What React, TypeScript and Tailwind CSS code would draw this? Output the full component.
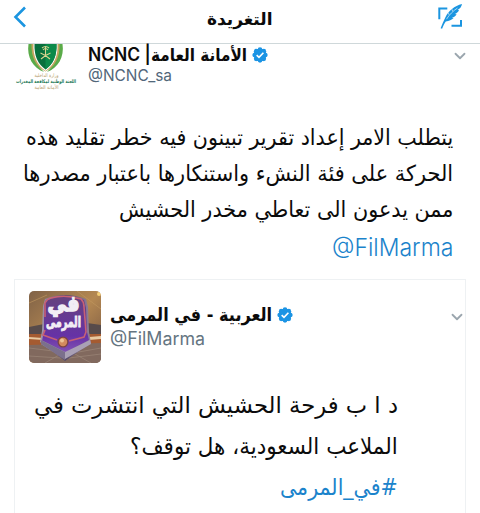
import { useLayoutEffect, useRef, useState } from "react";
import { ChevronDown } from "lucide-react";

type LineProps = {
  text: string;
  width: number;
  className?: string;
  dir?: "rtl" | "ltr";
};

// One line of text, squeezed or stretched to the given width
function Line({ text, width, className = "", dir = "rtl" }: LineProps) {
  const ref = useRef<HTMLSpanElement>(null);
  const [scale, setScale] = useState(1);

  useLayoutEffect(() => {
    if (ref.current) setScale(width / ref.current.offsetWidth);
  }, [width, text]);

  return (
    <div dir={dir} style={{ width }} className={`whitespace-nowrap ${className}`}>
      <span
        ref={ref}
        className={`inline-block ${dir === "rtl" ? "origin-right" : "origin-left"}`}
        style={{ transform: `scaleX(${scale})` }}
      >
        {text}
      </span>
    </div>
  );
}

function VerifiedBadge() {
  return (
    <svg viewBox="0 0 24 24" className="size-4 shrink-0">
      <g fill="#1c94e4">
        <circle cx="12" cy="12" r="9.6" />
        <circle cx="12" cy="4" r="3.5" />
        <circle cx="17.7" cy="6.3" r="3.5" />
        <circle cx="20" cy="12" r="3.5" />
        <circle cx="17.7" cy="17.7" r="3.5" />
        <circle cx="12" cy="20" r="3.5" />
        <circle cx="6.3" cy="17.7" r="3.5" />
        <circle cx="4" cy="12" r="3.5" />
        <circle cx="6.3" cy="6.3" r="3.5" />
      </g>
      <path d="M7 12.2l3.5 3.4 6.6-7" fill="none" stroke="#fff" strokeWidth="2.4" />
    </svg>
  );
}

function ComposeIcon() {
  return (
    <svg viewBox="0 0 26 26" className="h-[26px] w-[26px]">
      <path d="M10.300 5.500H2.300v10.700M24 17v5.700h-9.500" fill="none" stroke="#1b95e0" strokeWidth="2" />
      <path
        d="M25 1C17.500 3 11.500 7.500 8.300 14.500 6.700 18 5 21.500 3.600 25.300l1.500.4c1.100-3 2.300-5.200 3.700-7.300 3.200-.2 6-1.300 7.800-3.300l-1.800-.3c2.300-.7 3.800-1.900 4.800-3.600l-2-.1c2.100-.9 3.500-2.200 4.500-3.900l-1.500-.1C23.200 5.500 24.600 3.500 25 1z"
        fill="#1b95e0"
      />
      <path d="M9.500 16.200C12.500 11.500 16 8 20.500 5M11.300 9.500l.7 2.300M15 6.300l.6 2" fill="none" stroke="#fff" strokeWidth=".6" />
    </svg>
  );
}

function NcncLogo() {
  return (
    <svg viewBox="0 0 64 50" className="h-[50px] w-16">
      <path d="M14.500 0C12.500 13 19 24 30 28 22 20 17.500 11 18 0z" fill="#5aab49" />
      <path d="M48.500 0C50.500 13 44 24 33 28 41 20 45.500 11 45 0z" fill="#5aab49" />
      <path d="M17.500 0C17 13 22 23 31.500 27.500 41 23 46 13 45.500 0z" fill="#c3a45f" />
      <path d="M19.500 0C18.800 12 23 21 31.500 27 40 21 44.200 12 43.500 0z" fill="#fff" />
      <path d="M20.500 0C20 12 24 20 31.500 25.500 39 20 43 12 42.500 0z" fill="#08703d" />
      <path d="M31.500 0v25.500C39 20 43 12 42.500 0z" fill="#0c8a4a" />
      <path
        d="M31.500 3v9M28 4q3.500-3 7 0M29 6q2.500-3 5 0M26.500 9q5 2 9.500 6M36.500 9q-5 2-9.500 6"
        fill="none"
        stroke="#d9d58f"
        strokeWidth="1.100"
      />
      <g textAnchor="middle" className="font-['DejaVu_Sans',sans-serif]">
        <text x="32.500" y="33" fontSize="5" textLength="24" lengthAdjust="spacingAndGlyphs" fill="#b39a67">
          وزارة الداخلية
        </text>
        <text
          x="32"
          y="38.800"
          fontSize="5"
          fontWeight="700"
          textLength="60"
          lengthAdjust="spacingAndGlyphs"
          fill="#167550"
        >
          اللجنة الوطنية لمكافحة المخدرات
        </text>
        <text x="32.500" y="45" fontSize="5" textLength="24" lengthAdjust="spacingAndGlyphs" fill="#b39a67">
          الأمانة العامة
        </text>
      </g>
    </svg>
  );
}

function ShowAvatar() {
  return (
    <svg viewBox="0 0 72 72" className="size-[72px] shrink-0 rounded-[5px]">
      <defs>
        <linearGradient id="sky" x1="0" y1="0" x2="1" y2="1">
          <stop offset="0" stopColor="#806247" />
          <stop offset=".5" stopColor="#b48852" />
          <stop offset="1" stopColor="#6d4e3f" />
        </linearGradient>
        <linearGradient id="shield" x1="0" y1="0" x2="0" y2="1">
          <stop offset="0" stopColor="#65427e" />
          <stop offset=".7" stopColor="#6632a6" />
          <stop offset="1" stopColor="#8353b4" />
        </linearGradient>
        <linearGradient id="steel" x1="0" y1="0" x2="1" y2="0">
          <stop offset="0" stopColor="#a39ab0" />
          <stop offset=".5" stopColor="#554966" />
          <stop offset="1" stopColor="#93829d" />
        </linearGradient>
      </defs>
      <rect width="72" height="72" fill="url(#sky)" />
      <path d="M0 36l15-3v12H0zM72 34l-14-2v11h14z" fill="#574b4b" />
      <path d="M0 43h72v11H0z" fill="#a55b31" />
      <path d="M0 46l14 1v2L0 48zM60 46l12-1v3l-12 1z" fill="#e8c9a1" />
      <path d="M0 54l72-2v20H0z" fill="#81695e" />
      <path d="M0 57l24 3M0 65l32 2M44 62l28-5M40 67l32-4M16 72l14-8M62 72l-16-9" stroke="#9c8778" strokeWidth=".7" />
      <path d="M48 0l24 18M0 12l18-8" stroke="#c39a62" strokeWidth=".6" />
      <circle cx="70" cy="3" r="2" fill="#f4ce78" />
      <path d="M16 8q20-8 41 0l2 8 1 25 2 11-26 18L11 51l2-11 1-25z" fill="url(#steel)" />
      <path d="M17 9q19-7 38 0l2 8 1 24 2 8-24 13-23-12 2-10V15z" fill="url(#shield)" />
      <path d="M16 26V12q2-4 6-5 14-4 30 1 3 3 3 8l2 25-2 5-15 4M16 39l-2 5 14 5" fill="none" stroke="#c76075" strokeWidth="1.600" />
      <path d="M12 49l24 12 25-12 1 4-26 15-24-15z" fill="#a9a0b5" />
      <path d="M36 61v8L12 53v-4z" fill="#7b708c" />
      <circle cx="34" cy="51" r="5.500" fill="#7d4442" />
      <circle cx="34" cy="51" r="4.200" fill="#d28b5d" />
      <circle cx="33" cy="49.500" r="2" fill="#edc394" />
      <g
        textAnchor="middle"
        fill="#f2eef5"
        stroke="#f2eef5"
        strokeWidth="1.500"
        className="font-['DejaVu_Sans',sans-serif] font-bold"
      >
        <text x="34.500" y="20" fontSize="22" textLength="32" lengthAdjust="spacingAndGlyphs">
          في
        </text>
        <text x="34.500" y="36" fontSize="15" strokeWidth="1" textLength="35" lengthAdjust="spacingAndGlyphs">
          المرمى
        </text>
      </g>
    </svg>
  );
}

export default function App() {
  return (
    <div className="h-[513px] w-[480px] overflow-hidden bg-white font-['DejaVu_Sans',sans-serif] text-[#0b0b0b]">
      <header className="flex h-11 items-start justify-between border-b border-[#cfd8da] pr-[17px] pl-[13px]">
        <svg viewBox="0 0 14 22" className="mt-1.5 h-[22px] w-3.5">
          <path d="M12 1.500L2.500 11l9.500 9.500" fill="none" stroke="#1b95e0" strokeWidth="2.600" />
        </svg>
        <Line text="التغريدة" width={66} className="mt-[5px] ml-[15px] text-[17px] leading-7 font-bold" />
        <div className="mt-[3px]">
          <ComposeIcon />
        </div>
      </header>

      <article>
        <div className="flex h-[67px] pl-3.5">
          <NcncLogo />
          <div className="ml-2.5 flex-1">
            <div className="flex items-center">
              <div className="flex h-[22px] items-center">
                <Line
                  dir="ltr"
                  text="NCNC |"
                  width={63}
                  className="font-['Inter',sans-serif] text-lg leading-[22px] font-semibold"
                />
                <Line text="الأمانة العامة" width={96} className="text-[17px] leading-[22px] font-bold" />
              </div>
              <div className="ml-[5px]">
                <VerifiedBadge />
              </div>
            </div>
            <Line
              dir="ltr"
              text="@NCNC_sa"
              width={84}
              className="font-['Inter',sans-serif] text-base leading-[19px] text-[#52677a]"
            />
          </div>
          <ChevronDown className="mt-[3px] mr-[11px] size-[18px] text-[#9ba6ae]" strokeWidth={2.4} />
        </div>

        <div className="flex flex-col items-end pt-[9px] pr-[27px] text-[22px] leading-9">
          <Line text="يتطلب الامر إعداد تقرير تبينون فيه خطر تقليد هذه" width={427} />
          <Line text="الحركة على فئة النشء واستنكارها باعتبار مصدرها" width={430} />
          <Line text="ممن يدعون الى تعاطي مخدر الحشيش" width={334} />
          <Line
            dir="ltr"
            text="@FilMarma"
            width={121}
            className="font-['Inter',sans-serif] text-2xl leading-10 font-light text-[#1b83cb]"
          />
        </div>

        <section className="mt-[11px] ml-3.5 h-[240px] w-[452px] border border-[#eef1f3]">
          <div className="flex pt-[11px] pl-3.5">
            <ShowAvatar />
            <div className="ml-[9px] flex-1 pt-3">
              <div className="flex items-center">
                <Line text="العربية - في المرمى" width={162} className="text-lg leading-6 font-bold" />
                <div className="ml-[5px]">
                  <VerifiedBadge />
                </div>
              </div>
              <Line
                dir="ltr"
                text="@FilMarma"
                width={95}
                className="font-['Inter',sans-serif] text-lg leading-6 text-[#657581]"
              />
            </div>
            <ChevronDown className="mt-[17px] -mr-px size-[18px] text-[#9ba6ae]" strokeWidth={2.4} />
          </div>
          <div className="flex flex-col items-end pt-[22px] pr-[67px] text-[23px] leading-[41px]">
            <Line text="د ا ب فرحة الحشيش التي انتشرت في" width={364} />
            <Line text="الملاعب السعودية، هل توقف؟" width={268} />
            <Line text="#في_المرمى" width={118} className="text-[#1b83cb]" />
          </div>
        </section>
      </article>
    </div>
  );
}
